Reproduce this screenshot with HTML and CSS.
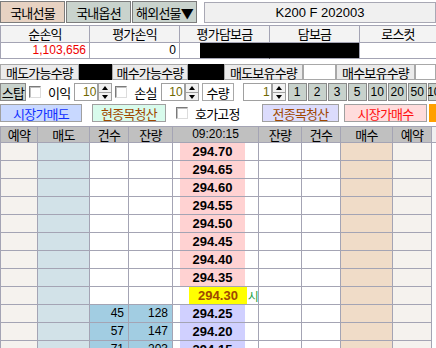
FILE: index.html
```html
<!DOCTYPE html>
<html lang="ko">
<head>
<meta charset="utf-8">
<link rel="stylesheet" href="styles.css">
</head>
<body>
<div class="top">
  <div class="tab on">국내선물</div>
  <div class="tab">국내옵션</div>
  <div class="tab">해외선물▼</div>
  <div class="code">K200 F 202003</div>
</div>

<div class="sum">
  <div class="sh">순손익</div>
  <div class="sh">평가손익</div>
  <div class="sh">평가담보금</div>
  <div class="sh">담보금</div>
  <div class="sh">로스컷</div>
  <div class="sv red">1,103,656</div>
  <div class="sv">0</div>
  <div class="sv blk-part"><span class="blk"></span></div>
  <div class="sv blk-full"></div>
  <div class="sv"></div>
</div>

<div class="qty">
  <div class="lbl w79">매도가능수량</div>
  <div class="box black w33"></div>
  <div class="lbl w76">매수가능수량</div>
  <div class="box black w36"></div>
  <div class="lbl w79">매도보유수량</div>
  <div class="box w33"></div>
  <div class="lbl w79">매수보유수량</div>
  <div class="box w21"></div>
</div>

<div class="ctrl">
  <div class="gbtn stop">스탑</div>
  <span class="chk c1"></span>
  <span class="txt t1">이익</span>
  <div class="spin s1"><div class="spin-in">10</div><div class="spin-b"><span class="up"></span><span class="dn"></span></div></div>
  <span class="chk c2"></span>
  <span class="txt t2">손실</span>
  <div class="spin s2"><div class="spin-in">10</div><div class="spin-b"><span class="up"></span><span class="dn"></span></div></div>
  <div class="qlbl">수량</div>
  <div class="spin s3"><div class="spin-in">1</div><div class="spin-b"><span class="up"></span><span class="dn"></span></div></div>
  <div class="nums">
    <div class="gbtn num">1</div>
    <div class="gbtn num">2</div>
    <div class="gbtn num">3</div>
    <div class="gbtn num">5</div>
    <div class="gbtn num">10</div>
    <div class="gbtn num">20</div>
    <div class="gbtn num">50</div>
    <div class="gbtn num">100</div>
  </div>
</div>

<div class="acts">
  <div class="act sell">시장가매도</div>
  <div class="act cur">현종목청산</div>
  <span class="chk c3"></span>
  <span class="txt t3">호가고정</span>
  <div class="act all">전종목청산</div>
  <div class="act buy">시장가매수</div>
  <div class="orange"></div>
</div>

<div class="grid">
  <div class="gh">예약</div>
  <div class="gh">매도</div>
  <div class="gh">건수</div>
  <div class="gh">잔량</div>
  <div class="gh time">09:20:15</div>
  <div class="gh">잔량</div>
  <div class="gh">건수</div>
  <div class="gh">매수</div>
  <div class="gh">예약</div>
  <div class="gh sb"></div>
</div>
<div class="grid rows" id="rows"></div>

<script src="app.js"></script>
</body>
</html>
```

FILE: app.js
```js
var data = [
  ["294.70","ask","","",""],
  ["294.65","ask","","",""],
  ["294.60","ask","","",""],
  ["294.55","ask","","",""],
  ["294.50","ask","","",""],
  ["294.45","ask","","",""],
  ["294.40","ask","","",""],
  ["294.35","ask","","",""],
  ["294.30","cur","","","시"],
  ["294.25","bid","45","128",""],
  ["294.20","bid","57","147",""],
  ["294.15","bid","71","203",""]
];
var html = "";
data.forEach(function (r) {
  var vol = r[2] ? " vol" : "";
  html += '<div class="c rsv"></div>' +
    '<div class="c sellc"></div>' +
    '<div class="c n' + vol + '">' + r[2] + '</div>' +
    '<div class="c n' + vol + '">' + r[3] + '</div>' +
    '<div class="c pc"><span class="pad"></span><span class="pr ' + r[1] + '">' + r[0] + '</span><span class="mk">' + r[4] + '</span></div>' +
    '<div class="c"></div>' +
    '<div class="c"></div>' +
    '<div class="c buyc"></div>' +
    '<div class="c rsv"></div>' +
    '<div class="c sbc"></div>';
});
document.getElementById("rows").innerHTML = html;
```

FILE: styles.css
```css
* { box-sizing: border-box; }
body {
  margin: 0;
  width: 436px;
  height: 348px;
  overflow: hidden;
  background: #fff;
  font-family: "Noto Sans CJK KR", sans-serif;
  font-size: 13px;
  letter-spacing: -0.8px;
  color: #000;
}

/* top tabs */
.top { display: flex; height: 25px; padding-top: 1px; align-items: flex-start; }
.tab {
  width: 65px; height: 22px; margin-right: 1px; flex-shrink: 0;
  border: 1px solid #7c7c7c; background: #c9d3cd;
  display: flex; align-items: center; justify-content: center;
  line-height: 1; white-space: nowrap;
}
.tab.on { background: #e7d2c2; }
.code {
  margin-left: 6px; margin-top: 1px; flex: 1; height: 21px;
  border: 1px solid #a8a8b4; background: #f0f0f0;
  font-family: "Liberation Sans", sans-serif; font-size: 13px; letter-spacing: 0;
  display: flex; align-items: center; justify-content: center;
}

/* summary */
.sum {
  display: grid;
  grid-template-columns: 89px 90px 90px 90px 77px;
  grid-template-rows: 17px 16px;
  border-top: 1px solid #a4a4b4;
  border-left: 1px solid #a4a4b4;
}
.sh, .sv { border-right: 1px solid #a4a4b4; border-bottom: 1px solid #a4a4b4; line-height: 15px; }
.sh { background: #f3f3f3; text-align: center; }
.sv { background: #fff; text-align: right; padding-right: 3px; font-family: "Liberation Sans", sans-serif; font-size: 12px; letter-spacing: 0; }
.sv.red { color: #f00000; }
.blk-part { display: flex; justify-content: flex-end; padding-right: 0; border-right-color: #000; }
.blk { display: block; width: 69px; height: 15px; background: #000; }
.blk-full { background: #000; }

/* quantities */
.qty { display: flex; height: 16px; margin-top: 5px; }
.lbl {
  border: 1px solid #a8a8a8; background: #ebebeb; flex-shrink: 0;
  display: flex; align-items: center; justify-content: center;
  line-height: 1; white-space: nowrap;
}
.box { border: 1px solid #a8a8a8; background: #fff; flex-shrink: 0; }
.box.black { background: #000; border-color: #000; }
.w79 { width: 79px; } .w76 { width: 76px; } .w33 { width: 33px; } .w36 { width: 36px; } .w21 { width: 21px; }

/* controls */
.ctrl { display: flex; align-items: center; height: 18px; margin-top: 3px; overflow: hidden; }
.ctrl > * { flex-shrink: 0; }
.gbtn {
  height: 18px; border: 1px solid #8a8a8a; background: #c8d2cc; flex-shrink: 0;
  display: flex; align-items: center; justify-content: center;
  line-height: 1; white-space: nowrap;
}
.stop { width: 26px; }
.chk {
  display: block; width: 12px; height: 12px; background: #fff; flex-shrink: 0;
  border: 1px solid; border-color: #7a7a7a #dcdcdc #dcdcdc #7a7a7a;
  box-shadow: inset 1px 1px 0 #c0c0c0;
}
.c1 { margin-left: 3px; }
.t1 { margin-left: 7px; }
.txt { line-height: 1; white-space: nowrap; flex-shrink: 0; }
.spin { display: flex; height: 18px; }
.spin-in {
  border: 1px solid #a0a0a0; background: #fff;
  color: #6f6800; text-align: right; padding-right: 1px; letter-spacing: 0;
  font-family: "Liberation Sans", sans-serif; font-size: 12px; line-height: 16px;
}
.spin-b { width: 14px; display: flex; flex-direction: column; }
.spin-b span {
  flex: 1; border: 1px solid #a0a0a0; background: #f2f2f2; position: relative;
}
.spin-b .dn { border-top: 0; }
.spin-b .up::after, .spin-b .dn::after {
  content: ""; position: absolute; left: 3px; top: 2px;
  border-left: 3px solid transparent; border-right: 3px solid transparent;
}
.spin-b .up::after { border-bottom: 4px solid #000; }
.spin-b .dn::after { border-top: 4px solid #000; top: 2px; }
.s1 { margin-left: 4px; } .s1 .spin-in { width: 24px; }
.c2 { margin-left: 3px; }
.t2 { margin-left: 7px; }
.s2 { margin-left: 4px; } .s2 .spin-in { width: 24px; }
.qlbl {
  margin-left: 3px; width: 32px; height: 18px;
  border: 1px solid #a8a8a8; background: #fff;
  display: flex; align-items: center; justify-content: center; line-height: 1;
}
.s3 { margin-left: 9px; } .s3 .spin-in { width: 29px; }
.nums { display: flex; gap: 1px; margin-left: 2px; }
.num { width: 19px; font-family: "Liberation Sans", sans-serif; font-size: 12px; letter-spacing: 0; }

/* action buttons */
.acts { display: flex; align-items: center; height: 18px; margin-top: 3px; }
.act {
  height: 18px; border: 1px solid #a0a0a0; flex-shrink: 0;
  display: flex; align-items: center; justify-content: center;
  line-height: 1; white-space: nowrap;
}
.sell { width: 82px; background: #c8d8ff; color: #1030ff; }
.cur { width: 74px; margin-left: 10px; background: #d8fbec; color: #a04800; }
.c3 { margin-left: 10px; }
.t3 { margin-left: 7px; }
.all { width: 77px; margin-left: auto; background: #dcdcfc; color: #a04800; }
.buy { width: 83px; margin-left: 5px; background: #ffdcdc; color: #ff1010; }
.orange { width: 7px; height: 18px; margin-left: 2px; background: #ffa000; flex-shrink: 0; }

/* order book */
.grid {
  display: grid;
  grid-template-columns: 37px 52px 39px 44px 86px 43px 39px 52px 39px 5px;
  border-left: 1px solid #a4a4b4;
}
.gh {
  height: 17px; background: #c0c0c0;
  border-right: 1px solid #a4a4b4; border-bottom: 1px solid #a4a4b4; border-top: 1px solid #a4a4b4;
  text-align: center; line-height: 15px;
}
.gh.time { font-family: "Liberation Sans", sans-serif; font-size: 12px; letter-spacing: 0; }
.gh.sb { background: #f0f0f0; border-right: 0; }
.acts + .grid { margin-top: 4px; }
.rows { grid-auto-rows: 18px; }
.c { border-right: 1px solid #a4a4b4; border-bottom: 1px solid #a4a4b4; background: #fff; }
.rsv { background: #f5f2ee; }
.sellc { background: #d2e2e8; }
.buyc { background: #f0dcc8; }
.sbc { background: #fff; border-right: 0; border-bottom: 0; }
.n {
  text-align: right; padding-right: 4px; letter-spacing: 0;
  font-family: "Liberation Sans", sans-serif; font-size: 12px; line-height: 17px;
}
.n.vol { background: #a2cde2; }
.pc { display: flex; }
.pad { width: 7px; }
.pr {
  width: 65px; text-align: center; letter-spacing: 0;
  font-family: "Liberation Sans", sans-serif; font-weight: bold; font-size: 13px; line-height: 17px;
}
.pr.ask { background: #ffd2d2; }
.pr.cur { background: #ffff00; }
.pr.bid { background: #d0d0ff; }
.mk { flex: 1; color: #20a040; font-size: 12px; line-height: 17px; padding-left: 1px; }
```
